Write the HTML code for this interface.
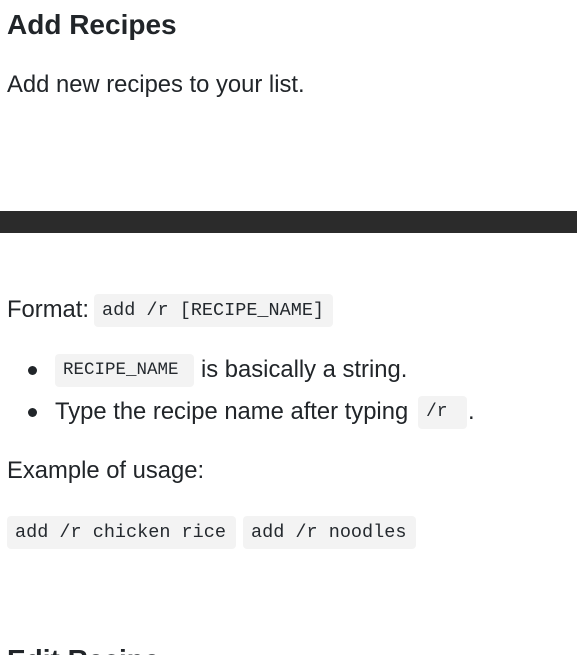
<!DOCTYPE html>
<html><head><meta charset="utf-8"><style>
html,body{margin:0;padding:0;overflow:hidden;height:655px}
#w{width:577px;height:655px;overflow:hidden;background:#fff;color:#212529;font-family:"Liberation Sans",sans-serif;font-size:23.8px;position:relative}
.a{position:absolute;white-space:nowrap;line-height:1}
code{font-family:"Liberation Mono",monospace;font-size:18.5px;background:#f3f3f3;border-radius:4px;position:absolute;line-height:33px;height:33px;padding:0 8px;box-sizing:border-box;color:#24292e}
.dot{position:absolute;width:9px;height:9px;border-radius:50%;background:#212529}
</style></head><body><div id="w">
<div class="a" style="left:7px;top:11px;font-size:28px;font-weight:bold">Add Recipes</div>
<div class="a" style="left:7px;top:73px">Add new recipes to your list.</div>
<div style="position:absolute;left:0;top:211px;width:577px;height:22px;background:#2b2b2b"></div>
<div class="a" style="left:7px;top:298px">Format:</div>
<code style="left:94px;top:294px;width:239px">add /r [RECIPE_NAME]</code>
<div class="dot" style="left:28px;top:366px"></div>
<code style="left:55px;top:354px;width:139px;font-size:17.5px">RECIPE_NAME</code>
<div class="a" style="left:201px;top:358px">is basically a string.</div>
<div class="dot" style="left:28px;top:408px"></div>
<div class="a" style="left:55px;top:400px">Type the recipe name after typing</div>
<code style="left:418px;top:396px;width:49px;font-size:18px">/r</code>
<div class="a" style="left:468px;top:400px">.</div>
<div class="a" style="left:7px;top:459px">Example of usage:</div>
<code style="left:7px;top:516px;width:229px">add /r chicken rice</code>
<code style="left:243px;top:516px;width:173px">add /r noodles</code>
<div class="a" style="left:7px;top:646px;font-size:28px;font-weight:bold">Edit Recipe</div>
</div></body></html>
